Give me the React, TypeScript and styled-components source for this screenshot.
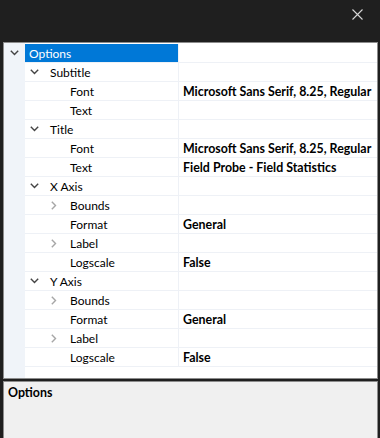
import React from 'react'
import styled, { createGlobalStyle } from 'styled-components'

type Row = {
  name: string
  level: number
  toggle?: 'open' | 'closed'
  value?: string
  selected?: boolean
}

const rows: Row[] = [
  { name: 'Options', level: 0, toggle: 'open', selected: true },
  { name: 'Subtitle', level: 1, toggle: 'open' },
  { name: 'Font', level: 2, value: 'Microsoft Sans Serif, 8.25, Regular' },
  { name: 'Text', level: 2 },
  { name: 'Title', level: 1, toggle: 'open' },
  { name: 'Font', level: 2, value: 'Microsoft Sans Serif, 8.25, Regular' },
  { name: 'Text', level: 2, value: 'Field Probe - Field Statistics' },
  { name: 'X Axis', level: 1, toggle: 'open' },
  { name: 'Bounds', level: 2, toggle: 'closed' },
  { name: 'Format', level: 2, value: 'General' },
  { name: 'Label', level: 2, toggle: 'closed' },
  { name: 'Logscale', level: 2, value: 'False' },
  { name: 'Y Axis', level: 1, toggle: 'open' },
  { name: 'Bounds', level: 2, toggle: 'closed' },
  { name: 'Format', level: 2, value: 'General' },
  { name: 'Label', level: 2, toggle: 'closed' },
  { name: 'Logscale', level: 2, value: 'False' },
]

export default function App() {
  return (
    <>
      <GlobalStyle />
      <StyledWindow>
        <StyledTitleBar>
          <StyledCloseButton aria-label="Close">
            <svg width="11" height="11" viewBox="0 0 11 11">
              <path d="M0.5 0.5 L10.5 10.5 M10.5 0.5 L0.5 10.5" stroke="#d6d6d6" strokeWidth="1.1" />
            </svg>
          </StyledCloseButton>
        </StyledTitleBar>
        <StyledGridPanel>
          <StyledMargin>
            <StyledMarginToggle>
              <Chevron open />
            </StyledMarginToggle>
          </StyledMargin>
          <StyledRows>
            {rows.map((row, i) => (
              <StyledRow key={i}>
                <StyledNameCell $selected={row.selected} $level={row.level}>
                  {row.level > 0 && (
                    <StyledToggle>{row.toggle && <Chevron open={row.toggle === 'open'} />}</StyledToggle>
                  )}
                  <span>{row.name}</span>
                </StyledNameCell>
                <StyledValueCell>{row.value}</StyledValueCell>
              </StyledRow>
            ))}
          </StyledRows>
        </StyledGridPanel>
        <StyledDescription>
          <StyledDescriptionTitle>Options</StyledDescriptionTitle>
        </StyledDescription>
      </StyledWindow>
    </>
  )
}

function Chevron({ open }: { open: boolean }) {
  if (open) {
    return (
      <svg width="9" height="6" viewBox="0 0 9 6">
        <path d="M0.8 0.8 L4.5 4.5 L8.2 0.8" fill="none" stroke="#444" strokeWidth="1.4" />
      </svg>
    )
  }
  return (
    <svg width="6" height="9" viewBox="0 0 6 9">
      <path d="M0.8 0.8 L4.5 4.5 L0.8 8.2" fill="none" stroke="#a6a6a6" strokeWidth="1.4" />
    </svg>
  )
}

const GlobalStyle = createGlobalStyle`
  html, body {
    margin: 0;
    padding: 0;
    background: #1f1f1f;
  }
  body {
    font-family: Lato, 'Noto Sans', sans-serif;
    font-size: 12px;
  }
`

const StyledWindow = styled('div')`
  width: 380px;
  height: 438px;
  display: flex;
  flex-direction: column;
  background: #1f1f1f;
  overflow: hidden;
`

const StyledTitleBar = styled('div')`
  height: 42px;
  flex-shrink: 0;
  display: flex;
  justify-content: flex-end;
  align-items: flex-start;
`

const StyledCloseButton = styled('div')`
  width: 46px;
  height: 28px;
  display: flex;
  align-items: center;
  justify-content: center;
`

const StyledGridPanel = styled('div')`
  margin: 0 2px 0 3px;
  height: 335px;
  flex-shrink: 0;
  min-width: 0;
  overflow: hidden;
  border: 1px solid #8c8c8c;
  background: #fff;
  display: flex;
`

const StyledMargin = styled('div')`
  width: 21px;
  flex-shrink: 0;
  background: #f0f4f9;
  padding-top: 1px;
  display: flex;
  flex-direction: column;
`

const StyledMarginToggle = styled('div')`
  height: 18px;
  display: flex;
  align-items: center;
  justify-content: center;
`

const StyledRows = styled('div')`
  flex: 1;
  min-width: 0;
  padding-top: 1px;
  display: flex;
  flex-direction: column;
`

const StyledRow = styled('div')`
  display: flex;
  height: 18px;
  border-bottom: 1px solid #eef1f6;
`

const StyledNameCell = styled('div')<{ $selected?: boolean; $level: number }>`
  width: 154px;
  flex-shrink: 0;
  box-sizing: border-box;
  display: flex;
  align-items: center;
  padding-left: ${(p) => (p.$level === 0 ? 4 : p.$level === 1 ? 0 : 20)}px;
  border-right: 1px solid #eef1f6;
  background: ${(p) => (p.$selected ? '#0078d7' : '#fff')};
  color: ${(p) => (p.$selected ? '#fff' : '#000')};
  white-space: nowrap;
`

const StyledToggle = styled('span')`
  width: 18px;
  display: inline-flex;
  align-items: center;
  justify-content: center;
  margin-right: 7px;
`

const StyledValueCell = styled('div')`
  flex: 1;
  min-width: 0;
  display: flex;
  align-items: center;
  padding-left: 4px;
  font-size: 12.4px;
  font-weight: bold;
  white-space: nowrap;
  overflow: hidden;
  color: #000;
`

const StyledDescription = styled('div')`
  margin: 2px 2px 0 3px;
  flex: 1;
  border: 1px solid #8c8c8c;
  border-bottom: none;
  background: #f0f0f0;
  padding: 3px 4px;
`

const StyledDescriptionTitle = styled('div')`
  font-size: 12.4px;
  font-weight: bold;
  color: #000;
`
